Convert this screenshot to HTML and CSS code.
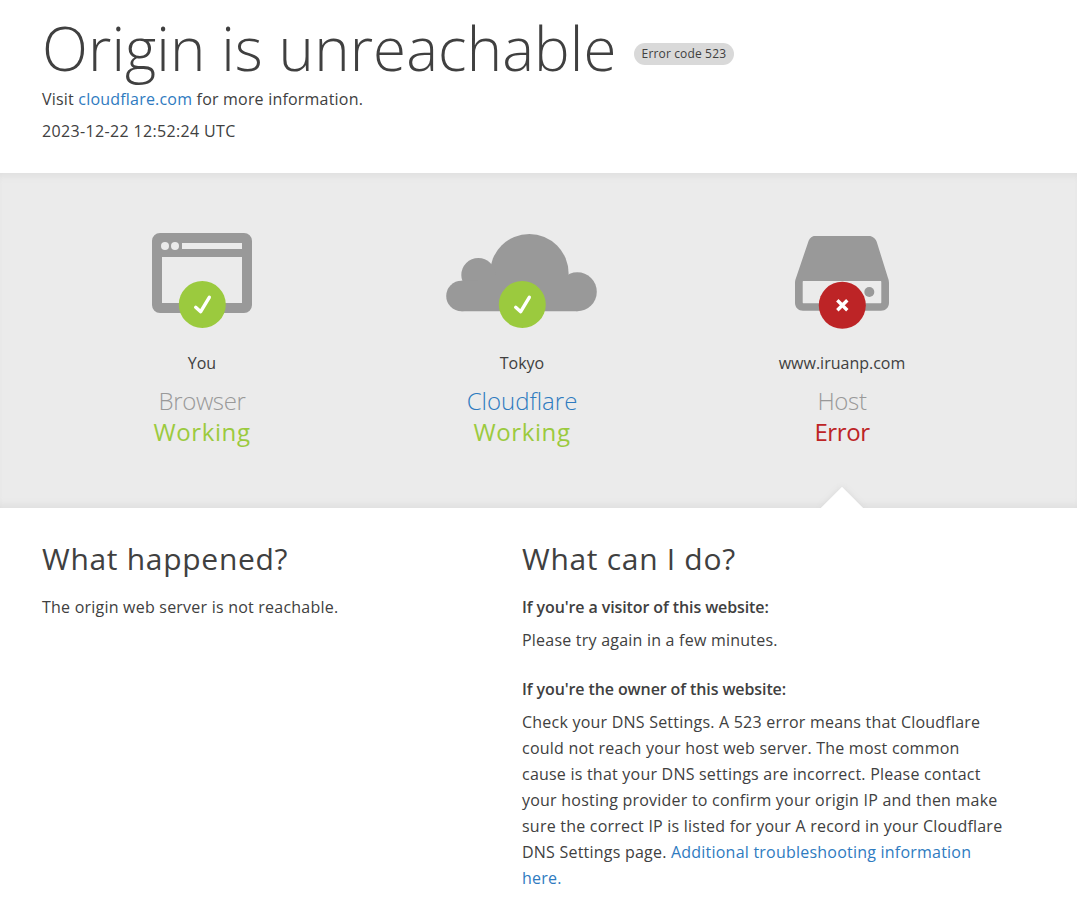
FILE: index.html
```html
<!DOCTYPE html>
<html lang="en">
<head>
<meta charset="utf-8">
<title>Origin is unreachable</title>
<link rel="stylesheet" href="styles.css">
</head>
<body>
<header class="header">
  <h1 class="title"><span class="title-text">Origin is unreachable</span><span class="code">Error code 523</span></h1>
  <p class="visit">Visit <a href="#">cloudflare.com</a> for more information.</p>
  <p class="time">2023-12-22 12:52:24 UTC</p>
</header>
<section class="status">
  <div class="node">
    <svg class="icon" viewBox="0 0 160 100" width="160" height="100">
      <path class="gray" fill-rule="evenodd" d="M38 1H122a8 8 0 0 1 8 8V73a8 8 0 0 1-8 8H38a8 8 0 0 1-8-8V9a8 8 0 0 1 8-8ZM40 25V71H120V25ZM60 11V17H120V11Z"/>
      <circle class="hole" cx="43" cy="14" r="4"/>
      <circle class="hole" cx="53" cy="14" r="4"/>
      <circle class="ok" cx="80.3" cy="72.5" r="23.5"/>
      <path class="mark" d="M73.7 75.3L78.7 79.7L87.3 65.3"/>
    </svg>
    <div class="place">You</div>
    <div class="kind">Browser</div>
    <div class="state good">Working</div>
  </div>
  <div class="node">
    <svg class="icon" viewBox="0 0 160 100" width="160" height="100">
      <g class="gray">
        <circle cx="87.3" cy="41.3" r="39.3"/>
        <circle cx="36.3" cy="43" r="17"/>
        <circle cx="19.5" cy="64" r="15.3"/>
        <circle cx="135.3" cy="59.7" r="19.5"/>
        <path d="M19.5 48.7H36V43H135.3V79.2H19.5Z"/>
      </g>
      <circle class="ok" cx="80.3" cy="72.5" r="23.5"/>
      <path class="mark" d="M73.7 75.3L78.7 79.7L87.3 65.3"/>
    </svg>
    <div class="place">Tokyo</div>
    <div class="kind brand"><a href="#">Cloudflare</a></div>
    <div class="state good">Working</div>
  </div>
  <div class="node">
    <svg class="icon" viewBox="0 0 160 100" width="160" height="100">
      <path class="gray" fill-rule="evenodd" d="M53 4H107C110.500 4 113.500 6.500 114.700 9.700L126 46C126.700 48 127 49 127 51V71C127 75.500 123.500 78.700 119 78.700H41C36.500 78.700 33 75.500 33 71V51C33 49 33.300 48 34 46L46.300 9.700C47.500 6.500 49.500 4 53 4ZM41.700 49C41 49 40.700 49.400 40.700 50V70.300C40.700 70.900 41 71.300 41.700 71.300H118.300C119 71.300 119.300 70.900 119.300 70.300V50C119.300 49.400 119 49 118.300 49Z"/>
      <circle class="gray" cx="107.300" cy="60" r="5"/>
      <circle class="bad" cx="80.300" cy="73.300" r="23.500"/>
      <path class="cross" d="M75.300 68.300L85.300 78.300M85.300 68.300L75.300 78.300"/>
    </svg>
    <div class="place">www.iruanp.com</div>
    <div class="kind">Host</div>
    <div class="state fail">Error</div>
  </div>
  <span class="pointer"></span>
</section>
<main class="info">
  <div class="col">
    <h2 class="heading">What happened?</h2>
    <p class="text">The origin web server is not reachable.</p>
  </div>
  <div class="col wide">
    <h2 class="heading">What can I do?</h2>
    <h5 class="sub">If you're a visitor of this website:</h5>
    <p class="text">Please try again in a few minutes.</p>
    <h5 class="sub second">If you're the owner of this website:</h5>
    <p class="text">Check your DNS Settings. A 523 error means that Cloudflare could not reach your host web server. The most common cause is that your DNS settings are incorrect. Please contact your hosting provider to confirm your origin IP and then make sure the correct IP is listed for your A record in your Cloudflare DNS Settings page. <a href="#">Additional troubleshooting information here.</a></p>
  </div>
</main>
</body>
</html>
```
FILE: styles.css
```css
* { box-sizing: border-box; }
html, body { margin: 0; padding: 0; }
body {
  background: #fff;
  color: #404040;
  font-family: "Open Sans", "Noto Sans", sans-serif;
  font-size: 16px;
  line-height: 26px;
  overflow: hidden;
}
a { color: #2f7bbf; text-decoration: none; }
p, h1, h2, h5 { margin: 0; }

.header { height: 173px; padding: 18px 42px 0; }
.title {
  display: flex;
  align-items: center;
  font-size: 60px;
  font-weight: 300;
  line-height: 60px;
  letter-spacing: 0.1px;
}
.code {
  margin: 12px 0 0 17px;
  padding: 0 8px;
  background: #d9d9d9;
  border-radius: 11px;
  font-size: 12px;
  font-weight: 400;
  line-height: 22px;
  letter-spacing: 0.15px;
}
.visit { margin-top: 8px; letter-spacing: 0.2px; }
.time { margin-top: 6px; letter-spacing: 0.35px; }

.status {
  position: relative;
  display: flex;
  height: 335px;
  padding: 59px 42px 0;
  overflow: hidden;
  background: #ebebeb;
  box-shadow: inset 0 8px 8px -6px #dcdcdc, inset 0 -8px 8px -6px #dcdcdc;
}
.node { flex: 0 0 320px; display: flex; flex-direction: column; align-items: center; text-align: center; }
.icon { display: block; margin-bottom: 18px; }
.gray { fill: #999; }
.hole { fill: #ebebeb; }
.ok { fill: #9bca3e; }
.bad { fill: #bd2426; }
.mark, .cross { fill: none; stroke: #fff; stroke-width: 3.4; }
.mark { stroke-linecap: round; stroke-linejoin: round; }
.kind { margin-top: 9px; font-size: 24px; font-weight: 300; line-height: 31px; color: #999; letter-spacing: -0.35px; }
.brand { letter-spacing: 0; }
.state { font-size: 24px; line-height: 31px; letter-spacing: -0.4px; }
.good { color: #9bca3e; letter-spacing: 0.6px; }
.fail { color: #bd2426; }
.pointer {
  position: absolute;
  left: 827px;
  bottom: -15px;
  width: 30px;
  height: 30px;
  background: #fff;
  transform: rotate(45deg);
  box-shadow: 0 0 6px #d8d8d8;
}

.info { display: flex; padding: 33px 42px 0; }
.col { flex: 0 0 480px; }
.wide { flex-basis: 484px; }
.heading { font-size: 30px; font-weight: 400; line-height: 36px; letter-spacing: 0.7px; }
.text { margin-top: 12px; letter-spacing: 0.22px; }
.sub { margin-top: 18px; font-size: 16px; font-weight: 600; line-height: 24px; letter-spacing: -0.1px; }
.second { margin-top: 24px; }
.sub + .text { margin-top: 8px; }
.col:first-child .text { margin-top: 17px; }
```
